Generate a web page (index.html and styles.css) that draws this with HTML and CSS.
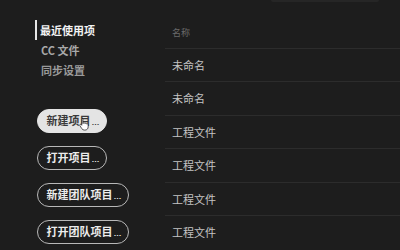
FILE: index.html
```html
<!DOCTYPE html>
<html lang="zh">
<head>
<meta charset="utf-8">
<link rel="stylesheet" href="styles.css">
</head>
<body>
<div class="app">
  <aside class="sidebar">
    <nav class="nav">
      <div class="nav-item active">最近使用项</div>
      <div class="nav-item cc">CC 文件</div>
      <div class="nav-item">同步设置</div>
    </nav>
    <div class="actions">
      <div class="btn primary">新建项目<span class="dots">…</span>
        <svg class="cursor" viewBox="0 0 12 16" width="10" height="14">
          <path d="M3.5 1.2c.7 0 1.2.5 1.2 1.2v5l.3-.1c.2-.5.7-.8 1.2-.7.5.1.8.4.9.8.3-.3.8-.4 1.2-.3.4.1.7.4.8.8.3-.2.7-.3 1.1-.1.5.2.8.7.8 1.2v2.5c0 2.1-1.6 3.8-3.7 3.8H6.5c-1.3 0-2.4-.6-3.1-1.700L1 9.9c-.3-.5-.2-1.1.3-1.4.5-.3 1.1-.2 1.4.2l.6.8V2.4c0-.7.5-1.2 1.2-1.2z" fill="#fff" stroke="#222" stroke-width="0.9"/>
        </svg>
      </div>
      <div class="btn">打开项目<span class="dots">…</span></div>
      <div class="btn">新建团队项目<span class="dots">…</span></div>
      <div class="btn">打开团队项目<span class="dots">…</span></div>
    </div>
  </aside>
  <main class="list">
    <div class="header">
      <div class="search-edge"></div>
      <div class="col-label">名称</div>
    </div>
    <div class="row">未命名</div>
    <div class="row">未命名</div>
    <div class="row">工程文件</div>
    <div class="row">工程文件</div>
    <div class="row">工程文件</div>
    <div class="row">工程文件</div>
  </main>
</div>
</body>
</html>
```

FILE: styles.css
```css
html, body {
  margin: 0;
  padding: 0;
  background: #1d1d1d;
  width: 400px;
  height: 250px;
  overflow: hidden;
  font-family: "Noto Sans CJK SC", "Noto Sans", sans-serif;
}
.app {
  display: flex;
  width: 400px;
  height: 250px;
}
.sidebar {
  width: 165px;
  flex: none;
  padding-left: 37px;
  box-sizing: border-box;
}
.nav {
  padding-top: 20px;
  display: flex;
  flex-direction: column;
}
.nav-item {
  height: 20px;
  line-height: 20px;
  font-size: 11px;
  color: #9a9a9a;
  font-weight: 700;
  padding-left: 4px;
  border-left: 2px solid transparent;
  margin-left: -2px;
}
.nav-item.active {
  color: #f2f2f2;
  border-left-color: #e6e6e6;
  padding-left: 3px;
}
.nav-item.cc {
  color: #a8a8a8;
}
.actions {
  margin-top: 29px;
  display: flex;
  flex-direction: column;
  align-items: flex-start;
  gap: 13px;
}
.btn {
  position: relative;
  height: 24px;
  box-sizing: border-box;
  border: 1.5px solid #b8b8b8;
  border-radius: 12px;
  padding: 0 6px 0 8.5px;
  font-size: 11px;
  line-height: 21px;
  font-weight: 700;
  color: #ececec;
  white-space: nowrap;
}
.dots {
  font-family: "Liberation Sans", sans-serif;
  font-size: 8px;
  font-weight: 700;
  margin-left: 1px;
}
.btn.primary {
  background: #e4e4e4;
  border-color: #e4e4e4;
  color: #3a3a3a;
}
.cursor {
  position: absolute;
  left: 41px;
  top: 7px;
}
.list {
  flex: 1;
  display: flex;
  flex-direction: column;
}
.header {
  height: 48px;
  box-sizing: border-box;
}
.search-edge {
  margin-left: 106px;
  width: 108px;
  height: 2px;
  background: #262626;
  border-radius: 0 0 2px 2px;
}
.col-label {
  margin-top: 25px;
  padding-left: 7px;
  font-size: 9px;
  line-height: 12px;
  color: #6a6a6a;
}
.row {
  height: 33.4px;
  box-sizing: border-box;
  border-top: 1.5px solid #2c2c2c;
  padding-left: 7px;
  font-size: 11px;
  line-height: 32px;
  color: #c4c4c4;
}
```
